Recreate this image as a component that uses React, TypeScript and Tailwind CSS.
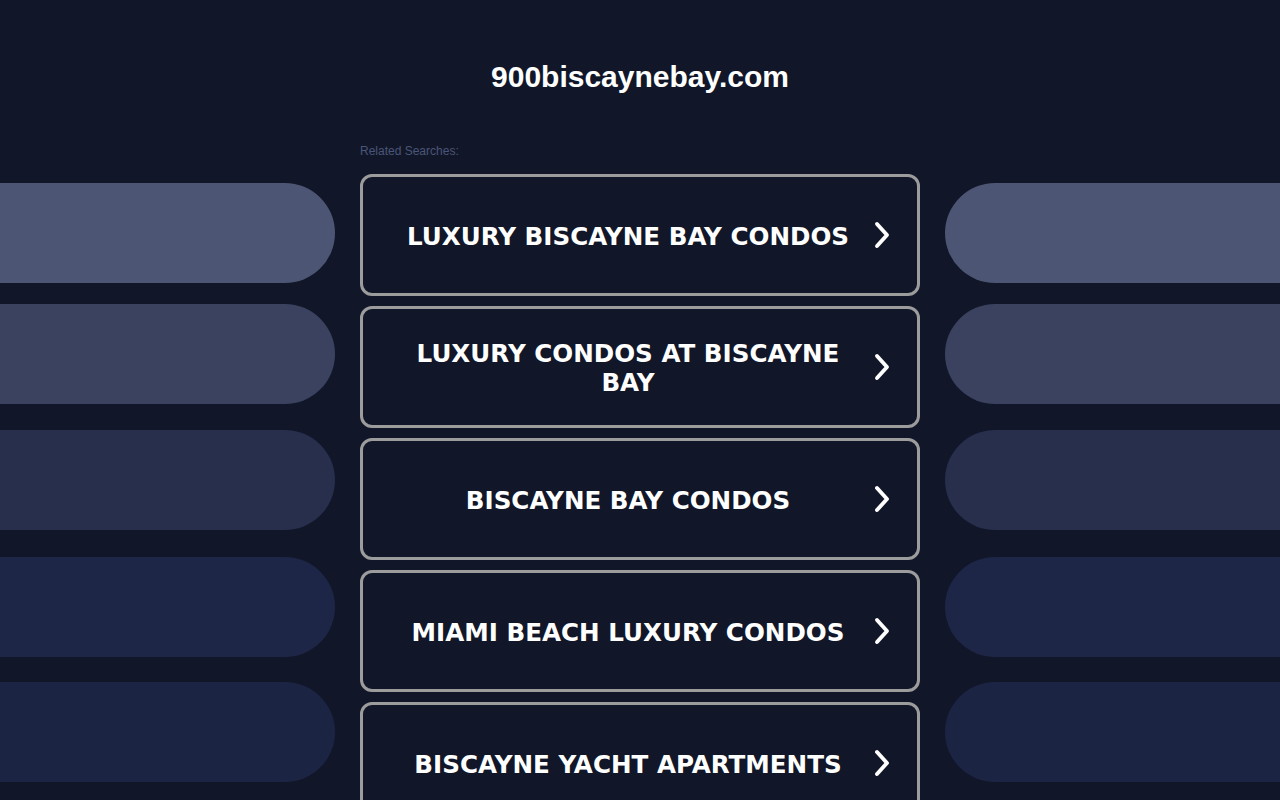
const searches = [
  "LUXURY BISCAYNE BAY CONDOS",
  "LUXURY CONDOS AT BISCAYNE BAY",
  "BISCAYNE BAY CONDOS",
  "MIAMI BEACH LUXURY CONDOS",
  "BISCAYNE YACHT APARTMENTS",
];

// side decoration pills, top margins taken from the screenshot
const pills = [
  { bg: "bg-[#4c5573]", mt: "mt-[43px]" },
  { bg: "bg-[#3a4260]", mt: "mt-[21px]" },
  { bg: "bg-[#272f4d]", mt: "mt-[26px]" },
  { bg: "bg-[#1e2647]", mt: "mt-[27px]" },
  { bg: "bg-[#1c2444]", mt: "mt-[25px]" },
];

function Chevron() {
  return (
    <svg width="16" height="28" viewBox="0 0 16 28" fill="none">
      <polyline
        points="3,3 13,14 3,25"
        stroke="white"
        strokeWidth="3.9"
        strokeLinecap="round"
        strokeLinejoin="round"
      />
    </svg>
  );
}

function SideColumn({ side }: { side: "left" | "right" }) {
  return (
    <div className="flex flex-col">
      {pills.map((p, i) => (
        <div
          key={i}
          className={`h-[100px] ${p.mt} ${p.bg} ${side === "left" ? "rounded-r-full" : "rounded-l-full"}`}
        />
      ))}
    </div>
  );
}

export default function App() {
  return (
    <div className="h-[800px] w-full overflow-hidden bg-[#111729] font-['Liberation_Sans',Arial,sans-serif]">
      <h1 className="pt-[59px] text-center text-[30px] font-bold leading-[36px] text-white">
        900biscaynebay.com
      </h1>
      <div className="mt-[45px] grid grid-cols-[335px_560px_335px] gap-x-[25px]">
        <SideColumn side="left" />
        <div className="flex flex-col pt-[3px]">
          <div className="mb-[15px] h-[16px] text-[12px] leading-[16px] text-[#4b5577]">
            Related Searches:
          </div>
          {searches.map((s) => (
            <div
              key={s}
              className="mb-[10px] flex h-[122px] shrink-0 items-center rounded-[12px] border-[3px] border-[#9c9c9c] pl-[40px] pr-[6px]"
            >
              <span className="flex-1 pt-[2px] text-center font-['DejaVu_Sans',Verdana,sans-serif] text-[24.6px] font-bold leading-[29px] text-white">
                {s}
              </span>
              <div className="flex w-[58px] justify-center">
                <Chevron />
              </div>
            </div>
          ))}
        </div>
        <SideColumn side="right" />
      </div>
    </div>
  );
}
